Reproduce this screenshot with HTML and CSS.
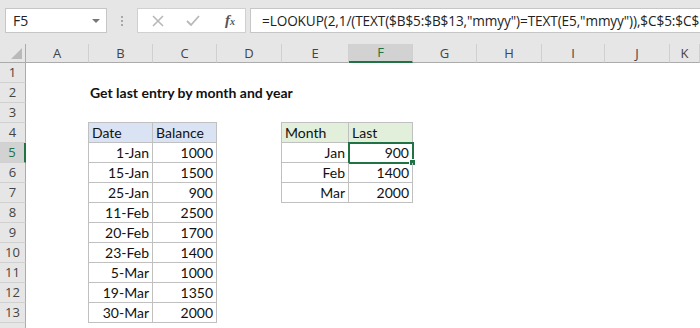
FILE: index.html
```html
<!DOCTYPE html>
<html lang="en">
<head>
  <meta charset="UTF-8">
  <title>Get last entry by month and year</title>
  <link rel="stylesheet" href="styles.css">
</head>
<body>
  <div class="formula-bar">
    <div class="name-box">
      <span>F5</span>
      <span class="caret"></span>
    </div>
    <div class="grip"><i></i><i></i><i></i></div>
    <div class="buttons">
      <svg class="btn" width="14" height="14" viewBox="0 0 14 14"><path d="M2 2 L12 12 M12 2 L2 12" stroke="#b8b8b8" stroke-width="1.6" fill="none"/></svg>
      <svg class="btn" width="16" height="14" viewBox="0 0 16 14"><path d="M2 7 L6 11 L14 2" stroke="#b8b8b8" stroke-width="1.8" fill="none"/></svg>
      <span class="fx">f<small>x</small></span>
    </div>
    <div class="formula">=LOOKUP(2,1/(TEXT($B$5:$B$13,"mmyy")=TEXT(E5,"mmyy")),$C$5:$C$13)</div>
  </div>

  <div class="sheet">
    <div class="corner"><span></span></div>
    <div class="col-head">A</div>
    <div class="col-head">B</div>
    <div class="col-head">C</div>
    <div class="col-head">D</div>
    <div class="col-head">E</div>
    <div class="col-head active">F</div>
    <div class="col-head">G</div>
    <div class="col-head">H</div>
    <div class="col-head">I</div>
    <div class="col-head">J</div>
    <div class="col-head">K</div>

    <div class="row-head">1</div>
    <div class="row-head">2</div>
    <div class="row-head">3</div>
    <div class="row-head">4</div>
    <div class="row-head active">5</div>
    <div class="row-head">6</div>
    <div class="row-head">7</div>
    <div class="row-head">8</div>
    <div class="row-head">9</div>
    <div class="row-head">10</div>
    <div class="row-head">11</div>
    <div class="row-head">12</div>
    <div class="row-head">13</div>
    <div class="row-head last"></div>

    <div class="title">Get last entry by month and year</div>

    <div class="range range-data">
      <div class="cell head blue">Date</div>
      <div class="cell head blue">Balance</div>
      <div class="cell num">1-Jan</div><div class="cell num">1000</div>
      <div class="cell num">15-Jan</div><div class="cell num">1500</div>
      <div class="cell num">25-Jan</div><div class="cell num">900</div>
      <div class="cell num">11-Feb</div><div class="cell num">2500</div>
      <div class="cell num">20-Feb</div><div class="cell num">1700</div>
      <div class="cell num">23-Feb</div><div class="cell num">1400</div>
      <div class="cell num">5-Mar</div><div class="cell num">1000</div>
      <div class="cell num">19-Mar</div><div class="cell num">1350</div>
      <div class="cell num">30-Mar</div><div class="cell num">2000</div>
    </div>

    <div class="range range-result">
      <div class="cell head green">Month</div>
      <div class="cell head green">Last</div>
      <div class="cell num">Jan</div><div class="cell num selected">900<span class="handle"></span></div>
      <div class="cell num">Feb</div><div class="cell num">1400</div>
      <div class="cell num">Mar</div><div class="cell num">2000</div>
    </div>
  </div>
</body>
</html>
```

FILE: styles.css
```css
body {
  margin: 0;
  width: 700px;
  height: 328px;
  overflow: hidden;
  background: #fff;
  font-family: "Lato", "Liberation Sans", sans-serif;
}

/* formula bar */

.formula-bar {
  height: 44px;
  background: #e6e6e6;
  display: flex;
  align-items: flex-start;
  padding-top: 8px;
  box-sizing: border-box;
}

.name-box {
  margin-left: 5px;
  width: 102px;
  height: 25px;
  box-sizing: border-box;
  background: #fff;
  border: 1px solid #c6c6c6;
  display: flex;
  align-items: center;
  justify-content: space-between;
  padding: 0 6px 0 7px;
  font-family: "Open Sans", sans-serif;
  font-size: 14px;
  color: #222;
}

.caret {
  width: 0;
  height: 0;
  border-left: 4px solid transparent;
  border-right: 4px solid transparent;
  border-top: 4px solid #777;
}

.grip {
  width: 30px;
  height: 25px;
  display: flex;
  flex-direction: column;
  align-items: center;
  justify-content: center;
  gap: 2px;
}

.grip i {
  width: 2px;
  height: 2px;
  background: #a8a8a8;
}

.buttons {
  width: 109px;
  height: 25px;
  box-sizing: border-box;
  background: #fff;
  border: 1px solid #d0d0d0;
  display: flex;
  align-items: center;
  padding: 0 10px 0 13px;
  gap: 20px;
}

.fx {
  margin-left: auto;
  font-family: "Liberation Serif", serif;
  font-style: italic;
  font-weight: bold;
  font-size: 15px;
  color: #555;
}

.fx small {
  font-size: 10px;
}

.formula {
  flex: 1;
  margin-left: 4px;
  height: 25px;
  box-sizing: border-box;
  background: #fff;
  border: 1px solid #c6c6c6;
  border-right: none;
  padding: 2px 0 0 11px;
  font-family: "Open Sans", sans-serif;
  font-size: 13.6px;
  letter-spacing: -0.1px;
  color: #222;
  white-space: nowrap;
  overflow: hidden;
}

/* sheet grid */

.sheet {
  display: grid;
  grid-template-columns: 26px 63px 64px 64px 65px 67px 64px 64px 65px 63px 65px 1fr;
  grid-template-rows: 19px repeat(14, 20px);
  grid-auto-flow: column;
}

.corner {
  grid-row: 1;
  grid-column: 1;
  background: #e6e6e6;
  border-right: 1px solid #ababab;
  border-bottom: 1px solid #ababab;
  position: relative;
}

.corner span {
  position: absolute;
  right: 3px;
  bottom: 3px;
  width: 0;
  height: 0;
  border-left: 11px solid transparent;
  border-bottom: 11px solid #b9b9b9;
}

.col-head {
  grid-row: 1;
  background: #e6e6e6;
  border-right: 1px solid #d0d0d0;
  border-bottom: 1px solid #ababab;
  text-align: center;
  font-family: "Open Sans", sans-serif;
  font-size: 13px;
  line-height: 18px;
  color: #444;
}

.col-head.active {
  background: #d2d2d2;
  border-bottom: 2px solid #217346;
  color: #217346;
  line-height: 17px;
}

.row-head {
  grid-column: 1;
  background: #e6e6e6;
  border-right: 1px solid #ababab;
  border-bottom: 1px solid #d0d0d0;
  text-align: center;
  font-family: "Open Sans", sans-serif;
  font-size: 13px;
  line-height: 19px;
  color: #444;
}

.row-head.active {
  background: #d2d2d2;
  border-right: 2px solid #217346;
  color: #217346;
}

.title {
  grid-column: 3 / span 4;
  grid-row: 3;
  font-weight: bold;
  font-size: 14px;
  line-height: 20px;
  padding-left: 1px;
  color: #111;
  white-space: nowrap;
}

.range {
  display: grid;
  grid-template-columns: 64px 64px;
  grid-auto-rows: 20px;
  align-self: start;
  justify-self: start;
  border-left: 1px solid #c0c0c0;
  border-top: 1px solid #c0c0c0;
  margin: -1px 0 0 -1px;
}

.range-data {
  grid-column: 3 / span 2;
  grid-row: 5 / span 10;
}

.range-result {
  grid-column: 6 / span 2;
  grid-row: 5 / span 4;
  grid-template-columns: 67px 64px;
}

.cell {
  border-right: 1px solid #c0c0c0;
  border-bottom: 1px solid #c0c0c0;
  font-size: 14px;
  line-height: 19px;
  padding: 0 3px;
  color: #111;
  white-space: nowrap;
  position: relative;
}

.cell.num {
  text-align: right;
}

.cell.blue {
  background: #dae3f3;
}

.cell.green {
  background: #e2efda;
}

.cell.selected {
  outline: 2px solid #217346;
  outline-offset: -1px;
}

.handle {
  position: absolute;
  right: -4px;
  bottom: -4px;
  width: 5px;
  height: 5px;
  background: #217346;
  border: 1px solid #fff;
}
```
